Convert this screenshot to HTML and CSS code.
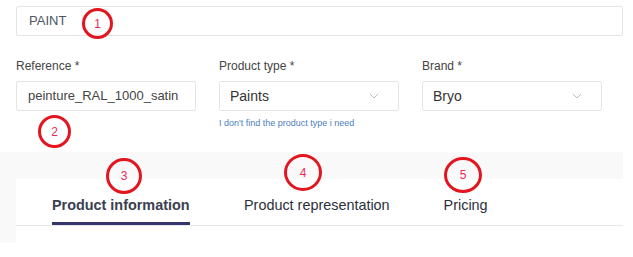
FILE: index.html
```html
<!DOCTYPE html>
<html lang="en">
<head>
    <meta charset="UTF-8">
    <title>Product form</title>
    <link rel="stylesheet" href="styles.css">
</head>
<body>

    <div class="search">PAINT</div>

    <div class="fields">
        <div class="field">
            <label>Reference *</label>
            <div class="input">peinture_RAL_1000_satin</div>
        </div>
        <div class="field">
            <label>Product type *</label>
            <div class="input select">Paints
                <svg class="chevron" width="10" height="6" viewBox="0 0 10 6"><polyline points="1,1 5,5 9,1" fill="none" stroke="#bcbcbc" stroke-width="1"/></svg>
            </div>
            <a class="help">I don't find the product type i need</a>
        </div>
        <div class="field">
            <label>Brand *</label>
            <div class="input select">Bryo
                <svg class="chevron" width="10" height="6" viewBox="0 0 10 6"><polyline points="1,1 5,5 9,1" fill="none" stroke="#bcbcbc" stroke-width="1"/></svg>
            </div>
        </div>
    </div>

    <div class="panel">
        <div class="card">
            <div class="tabs">
                <div class="tab active">Product information</div>
                <div class="tab">Product representation</div>
                <div class="tab">Pricing</div>
            </div>
        </div>
    </div>

    <!-- annotation marks -->
    <div class="mark m1">1</div>
    <div class="mark m2">2</div>
    <div class="mark m3">3</div>
    <div class="mark m4">4</div>
    <div class="mark m5">5</div>

</body>
</html>
```

FILE: styles.css
```css
* { box-sizing: border-box; margin: 0; padding: 0; }
body { font-family: "Liberation Sans", Arial, sans-serif; background: #fff; color: #333; width: 633px; height: 257px; overflow: hidden; position: relative; }

.search { margin: 6px 10px 0 16px; height: 30px; border: 1px solid #e4e4e4; border-radius: 2px; padding-left: 12px; font-size: 13px; line-height: 28px; color: #4b5663; }

.fields { display: flex; gap: 23px; padding-left: 16px; margin-top: 23px; }
.field { width: 180px; }
.field label { display: block; font-size: 12px; color: #444; height: 22px; line-height: 14px; }
.input { height: 30px; border: 1px solid #e4e4e4; border-radius: 2px; padding-left: 11px; font-size: 13px; line-height: 28px; color: #444; position: relative; }
.select { font-size: 14px; padding-left: 10px; color: #333; }
.chevron { position: absolute; right: 19px; top: 11px; }
.help { display: block; margin-top: 7px; font-size: 9px; color: #4d7fbd; }

.panel { background: #f9f9f9; margin-top: 24px; margin-right: 10px; height: 91px; padding-top: 27px; padding-left: 16px; }
.card { background: #fff; height: 100%; margin-right: -10px; }
.tabs { display: flex; gap: 54px; padding-left: 36px; border-bottom: 1px solid #e8e8e8; margin-right: 10px; height: 47px; }
.tab { font-size: 14.4px; color: #2b2f3a; padding-top: 18px; height: 46px; }
.tab.active { font-weight: bold; color: #3a4050; border-bottom: 3px solid #34356a; width: 138px; }

.mark { position: absolute; border: 3px solid #e3151f; border-radius: 50%; color: #ee2a5a; font-size: 12px; display: flex; align-items: center; justify-content: center; }
.m1 { left: 82px; top: 8px; width: 31px; height: 31px; }
.m2 { left: 38px; top: 115px; width: 33px; height: 33px; }
.m3 { left: 106px; top: 158px; width: 36px; height: 36px; }
.m4 { left: 284px; top: 154px; width: 38px; height: 37px; }
.m5 { left: 444px; top: 157px; width: 38px; height: 36px; }
```
